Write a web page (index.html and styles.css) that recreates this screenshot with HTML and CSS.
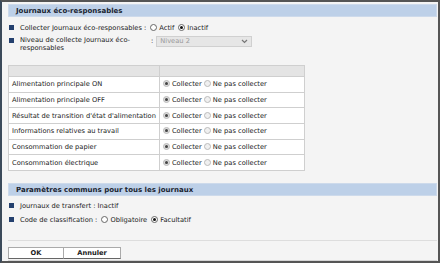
FILE: index.html
```html
<!DOCTYPE html>
<html>
<head lang="fr">
    <meta charset="UTF-8">
    <title>Journaux</title>
    <link rel="stylesheet" href="styles.css">
</head>
<body>
    <div id="frame">
        <div class="section-title">Journaux éco-responsables</div>
        <ul class="items">
            <li class="item">
                <span class="label">Collecter Journaux éco-responsables :</span>
                <span class="radio"></span><span class="opt">Actif</span>
                <span class="radio on"></span><span class="opt">Inactif</span>
            </li>
            <li class="item item-level">
                <span class="label label-wrap">Niveau de collecte Journaux éco-responsables</span>
                <span class="colon">:</span>
                <span class="select">Niveau 2
                    <svg width="7" height="5" viewBox="0 0 7 5"><path d="M1 1 L3.5 3.5 L6 1" fill="none" stroke="#777" stroke-width="1.2"/></svg>
                </span>
            </li>
        </ul>
        <table id="logs">
            <tr class="head"><td></td><td></td></tr>
            <tr><td>Alimentation principale ON</td><td><span class="radio dis on"></span>Collecter <span class="radio dis"></span>Ne pas collecter</td></tr>
            <tr><td>Alimentation principale OFF</td><td><span class="radio dis on"></span>Collecter <span class="radio dis"></span>Ne pas collecter</td></tr>
            <tr><td>Résultat de transition d'état d'alimentation</td><td><span class="radio dis on"></span>Collecter <span class="radio dis"></span>Ne pas collecter</td></tr>
            <tr><td>Informations relatives au travail</td><td><span class="radio dis on"></span>Collecter <span class="radio dis"></span>Ne pas collecter</td></tr>
            <tr><td>Consommation de papier</td><td><span class="radio dis on"></span>Collecter <span class="radio dis"></span>Ne pas collecter</td></tr>
            <tr><td>Consommation électrique</td><td><span class="radio dis on"></span>Collecter <span class="radio dis"></span>Ne pas collecter</td></tr>
        </table>
        <div class="section-title section-two">Paramètres communs pour tous les journaux</div>
        <ul class="items">
            <li class="item"><span class="label">Journaux de transfert : Inactif</span></li>
            <li class="item">
                <span class="label">Code de classification :</span>
                <span class="radio"></span><span class="opt">Obligatoire</span>
                <span class="radio on"></span><span class="opt">Facultatif</span>
            </li>
        </ul>
        <div class="buttons">
            <span class="btn">OK</span><span class="btn">Annuler</span>
        </div>
    </div>
</body>
</html>
```

FILE: styles.css
```css
*{
    margin: 0;
    padding: 0;
    box-sizing: border-box;
}
ul,ol{
    list-style: none;
}
html,body{
    width: 440px;
    height: 263px;
    overflow: hidden;
}
body{
    font-family: "DejaVu Sans", Verdana, sans-serif;
    font-size: 6.7px;
    color: #222;
    background: #f4f4f4;
}
#frame{
    width: 440px;
    height: 263px;
    border-top: 2px solid #555;
    border-left: 2px solid #3b4a5a;
    border-right: 2px solid #555;
    border-bottom: 2px solid #555;
    padding: 2px 1px 0 6px;
    display: flex;
    flex-direction: column;
}
.section-title{
    height: 13px;
    line-height: 12px;
    padding-left: 7px;
    font-weight: bold;
    font-size: 7px;
    color: #1a2430;
    background: #bdd0e8;
    border: 1px solid #cddaeb;
}
.items{
    padding-top: 5px;
}
.item{
    display: flex;
    align-items: center;
    min-height: 11px;
    margin-bottom: 3px;
    padding-left: 12px;
    position: relative;
}
.item:before{
    content: "";
    position: absolute;
    left: 1px;
    top: 3px;
    width: 5px;
    height: 5px;
    background: #24406e;
}
.label{
    margin-right: 4px;
}
.label-wrap{
    width: 127px;
    line-height: 8px;
}
.item-level:before{
    top: 2px;
}
.item-level{
    align-items: flex-start;
}
.colon{
    line-height: 11px;
    margin-right: 3px;
}
.select{
    width: 96px;
    height: 11px;
    border: 1px solid #d0d0d0;
    background: #e6e6e6;
    color: #999;
    padding-left: 3px;
    line-height: 9px;
    display: flex;
    align-items: center;
    justify-content: space-between;
    padding-right: 3px;
}
.radio{
    display: inline-block;
    width: 7px;
    height: 7px;
    border: 1px solid #666;
    border-radius: 50%;
    background: #fff;
    margin-right: 2px;
    vertical-align: -1px;
    position: relative;
}
.radio.on:after{
    content: "";
    position: absolute;
    left: 1px;
    top: 1px;
    width: 3px;
    height: 3px;
    border-radius: 50%;
    background: #111;
}
.radio.dis{
    border-color: #bbb;
    background: #f0f0f0;
}
.radio.dis.on{
    background: #ddd;
}
.radio.dis.on:after{
    background: #444;
}
.opt{
    margin-right: 4px;
}
#logs{
    margin-top: 10px;
    width: 297px;
    border-collapse: collapse;
    background: #fff;
}
#logs td{
    border: 1px solid #cfcfcf;
    height: 15.7px;
    padding: 0 3px;
    white-space: nowrap;
}
#logs td:first-child{
    width: 150px;
}
#logs .head td{
    background: #e4e4e4;
    height: 11px;
}
.section-two{
    margin-top: 12px;
}
.section-two + .items{
    padding-top: 4px;
}
.buttons{
    margin-top: auto;
    border-top: 1px solid #ddd;
    padding-top: 6px;
    height: 21px;
    display: flex;
    border-bottom: 1px solid #d4d4d4;
}
.btn{
    width: 56px;
    height: 12px;
    line-height: 10px;
    text-align: center;
    font-weight: bold;
    background: #fff;
    border: 1px solid #aaa;
    border-bottom-color: #666;
}
.btn + .btn{
    width: 57px;
    border-left: none;
}
```
